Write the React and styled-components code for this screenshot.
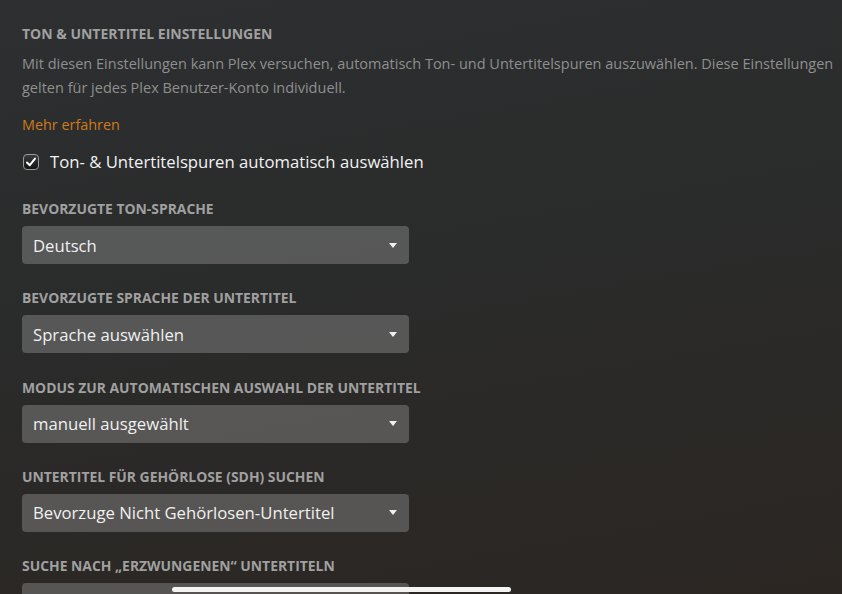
import styled, { createGlobalStyle } from "styled-components";

const GlobalStyle = createGlobalStyle`
  html, body {
    margin: 0;
    padding: 0;
    height: 100%;
  }
  body {
    background: linear-gradient(170deg, #2d2f30 0%, #2a2b2b 45%, #2b2622 100%);
    font-family: "Open Sans", "Noto Sans", sans-serif;
    overflow: hidden;
  }
`;

const fields = [
  { label: "Bevorzugte Ton-Sprache", value: "Deutsch" },
  { label: "Bevorzugte Sprache der Untertitel", value: "Sprache auswählen" },
  { label: "Modus zur automatischen Auswahl der Untertitel", value: "manuell ausgewählt" },
  { label: "Untertitel für Gehörlose (SDH) suchen", value: "Bevorzuge Nicht Gehörlosen-Untertitel" },
  { label: "Suche nach „erzwungenen“ Untertiteln", value: "" },
];

const App = () => {
  return (
    <>
      <GlobalStyle />
      <Page>
        <Heading>Ton &amp; Untertitel Einstellungen</Heading>
        <Description>
          Mit diesen Einstellungen kann Plex versuchen, automatisch Ton- und
          Untertitelspuren auszuwählen. Diese Einstellungen gelten für jedes
          Plex Benutzer-Konto individuell.
        </Description>
        <LearnMore href="#">Mehr erfahren</LearnMore>

        <CheckRow>
          <CheckBox>
            <svg width="12" height="12" viewBox="0 0 12 12">
              <path d="M2 6.5 L4.8 9.2 L10 2.6" fill="none" stroke="#fff" strokeWidth="2" strokeLinecap="round" strokeLinejoin="round" />
            </svg>
          </CheckBox>
          <CheckLabel>Ton- &amp; Untertitelspuren automatisch auswählen</CheckLabel>
        </CheckRow>

        {fields.map((field) => (
          <Field key={field.label}>
            <FieldLabel>{field.label}</FieldLabel>
            <Select>
              <span>{field.value}</span>
              <Caret />
            </Select>
          </Field>
        ))}
      </Page>
      <HomeIndicator />
    </>
  );
};

const Page = styled.div`
  padding: 24px 0 0 22px;
  height: 594px;
  box-sizing: border-box;
  overflow: hidden;
`;

const Heading = styled.h2`
  margin: 0 0 8px;
  font-size: 14px;
  font-weight: 700;
  text-transform: uppercase;
  color: #a0a0a0;
  line-height: 20px;
`;

const Description = styled.p`
  margin: 0;
  font-size: 14.5px;
  line-height: 24px;
  color: #8f8f8f;
`;

const LearnMore = styled.a`
  display: block;
  margin-top: 13px;
  font-size: 14.4px;
  line-height: 24px;
  color: #cc7b19;
  text-decoration: none;
`;

const CheckRow = styled.label`
  display: flex;
  align-items: center;
  gap: 11px;
  margin-top: 13px;
`;

const CheckBox = styled.span`
  width: 16px;
  height: 16px;
  box-sizing: border-box;
  border: 1px solid #9a9a9a;
  border-radius: 4px;
  background: linear-gradient(180deg, #3a3a3a, #141414);
  display: flex;
  align-items: center;
  justify-content: center;
  margin-left: 1px;
`;

const CheckLabel = styled.span`
  font-size: 16.7px;
  line-height: 24px;
  color: #f2f2f2;
`;

const Field = styled.div`
  margin-top: 25px;

  & + & {
    margin-top: 24.25px;
  }
`;

const FieldLabel = styled.div`
  font-size: 13.9px;
  font-weight: 700;
  text-transform: uppercase;
  color: #a0a0a0;
  line-height: 20px;
  margin-bottom: 7px;
`;

const Select = styled.div`
  width: 387px;
  height: 38px;
  box-sizing: border-box;
  padding: 0 12px 0 11px;
  border-radius: 4px;
  background: rgba(255, 255, 255, 0.21);
  display: flex;
  align-items: center;
  justify-content: space-between;
  font-size: 16.7px;
  color: #f0f0f0;
`;

const Caret = styled.span`
  width: 0;
  height: 0;
  border-left: 4.5px solid transparent;
  border-right: 4.5px solid transparent;
  border-top: 5px solid #f0f0f0;
`;

const HomeIndicator = styled.div`
  position: fixed;
  left: 172px;
  bottom: 2px;
  width: 339px;
  height: 5px;
  border-radius: 3px;
  background: #f4f4f4;
`;

export default App;
